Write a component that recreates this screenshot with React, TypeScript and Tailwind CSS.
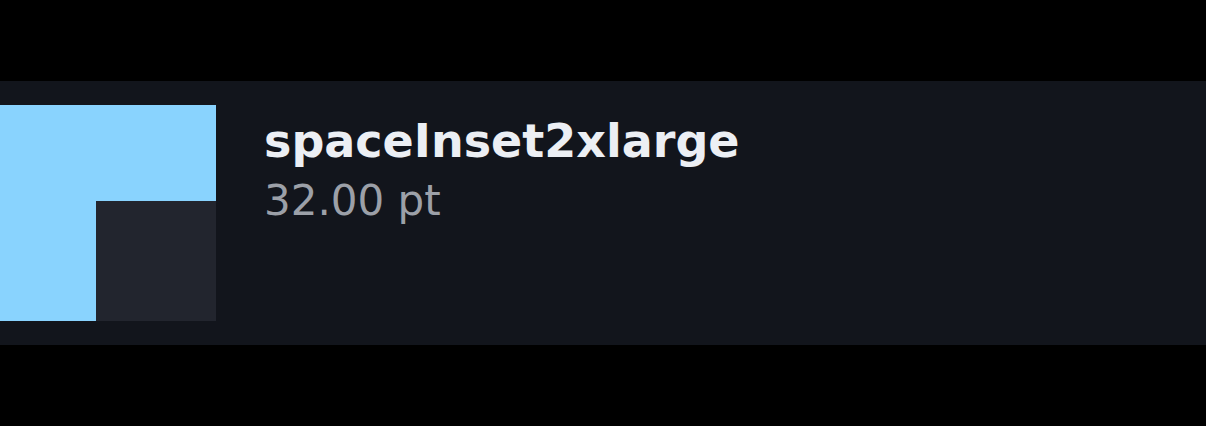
export default function App() {
  return (
    <div className="flex h-[426px] w-[1206px] flex-col justify-center bg-black">
      <div className="flex h-[264px] items-start gap-12 bg-[#12151c] py-6">
        <div className="flex h-[216px] w-[216px] shrink-0 items-end justify-end bg-[#89d3fe]">
          <div className="h-[120px] w-[120px] bg-[#22252e]" />
        </div>
        <div
          className="flex flex-col pt-[10px]"
          style={{ fontFamily: '"DejaVu Sans", sans-serif' }}
        >
          <div className="text-[46px] font-bold leading-[52px] text-[#eceff4]">
            spaceInset2xlarge
          </div>
          <div className="mt-2 text-[42px] leading-[52px] text-[#9ca0a8]">32.00 pt</div>
        </div>
      </div>
    </div>
  );
}
